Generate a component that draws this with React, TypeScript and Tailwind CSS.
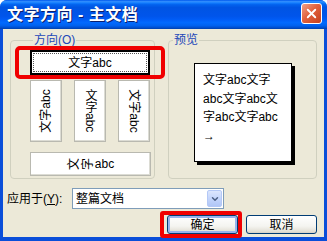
import { X, ChevronDown } from "lucide-react";

const font = "font-['Liberation_Sans','Noto_Sans_CJK_SC',sans-serif]";

function OptionButton({
  className,
  children,
}: {
  className: string;
  children: React.ReactNode;
}) {
  return (
    <div
      className={`flex items-center justify-center bg-white border border-[#b9b9b0] shadow-[inset_-1px_-1px_0_#dcdcd4] text-[12px] leading-[14px] text-black ${className}`}
    >
      {children}
    </div>
  );
}

function XpButton({
  label,
  primary,
}: {
  label: string;
  primary?: boolean;
}) {
  return (
    <button
      className={`w-[71px] h-[19px] rounded-[3px] border border-[#003c74] bg-[linear-gradient(to_bottom,#ffffff_0%,#f4f4f0_60%,#e3e0d6_90%,#d6d0c5_100%)] text-[12px] leading-[14px] text-black flex items-center justify-center ${
        primary ? "shadow-[inset_0_0_0_2px_#98b4ee]" : ""
      }`}
    >
      {label}
    </button>
  );
}

export default function App() {
  return (
    <div className={`w-[327px] h-[241px] bg-white ${font}`}>
      <div className="w-full h-full rounded-t-[7px] overflow-hidden flex flex-col bg-[#0a4ed9]">
        {/* Title bar */}
        <div className="h-[29px] shrink-0 flex items-center justify-between pl-[7px] pr-[5px] bg-[linear-gradient(to_bottom,#0058ee_0%,#3593ff_6%,#127dff_10%,#0262ee_16%,#0054e3_26%,#0055eb_56%,#005bf5_66%,#026afe_78%,#0062ef_88%,#0052d6_94%,#0040ab_100%)]">
          <span className="text-white font-bold text-[16px] leading-[18px] tracking-[0.5px] [text-shadow:1px_1px_0_#0a1f6e]">
            文字方向 - 主文档
          </span>
          <div className="w-[21px] h-[21px] mb-[2px] rounded-[3px] border border-white bg-[linear-gradient(135deg,#f0a088_0%,#e2623e_45%,#c4401d_100%)] flex items-center justify-center">
            <X className="w-[15px] h-[15px] text-white" strokeWidth={3} />
          </div>
        </div>

        {/* Body */}
        <div className="relative flex-1 mx-[3px] mb-[4px] bg-[#ece9d8] flex flex-col pt-[4px]">
          <div className="flex gap-[13px] px-[7px]">
            {/* Direction group */}
            <fieldset className="w-[146px] h-[146px] border border-[#d0d0bf] rounded-[4px] pl-[19px]">
              <legend className="ml-[3px] px-[1px] text-[12px] leading-[14px] text-[#1c47b8]">
                方向(O)
              </legend>
              <div className="pt-[3px] flex flex-col">
                <div className="w-[120px] h-[25px] bg-white border-2 border-black p-[1px]">
                  <div className="w-full h-full border border-dotted border-[#555] flex items-center justify-center text-[12px] leading-[14px]">
                    文字abc
                  </div>
                </div>
                <div className="mt-[5px] w-[120px] flex justify-between">
                  <OptionButton className="w-[32px] h-[62px]">
                    <span className="-rotate-90 whitespace-nowrap">文字abc</span>
                  </OptionButton>
                  <OptionButton className="w-[32px] h-[62px]">
                    <span className="[writing-mode:vertical-rl]">文字abc</span>
                  </OptionButton>
                  <OptionButton className="w-[32px] h-[62px]">
                    <span className="rotate-90 whitespace-nowrap">文字abc</span>
                  </OptionButton>
                </div>
                <OptionButton className="mt-[10px] w-[121px] h-[24px]">
                  <span className="inline-flex w-[14px] h-[12px] items-center justify-center">
                    <span className="-rotate-90">文</span>
                  </span>
                  <span className="inline-flex w-[14px] h-[12px] items-center justify-center">
                    <span className="-rotate-90">字</span>
                  </span>
                  <span>abc</span>
                </OptionButton>
              </div>
            </fieldset>

            {/* Preview group */}
            <fieldset className="w-[150px] h-[146px] border border-[#d0d0bf] rounded-[4px] flex flex-col items-center">
              <legend className="ml-[4px] px-[1px] text-[12px] leading-[14px] text-[#1c47b8]">
                预览
              </legend>
              <div className="mt-[16px] ml-[1px] w-[98px] h-[99px] bg-white border border-black shadow-[3px_3px_0_#000] pl-[8px] pt-[7px] text-[12px] leading-[18.5px] text-black whitespace-nowrap">
                <div>文字abc文字</div>
                <div>abc文字abc文</div>
                <div>字abc文字abc</div>
                <div>→</div>
              </div>
            </fieldset>
          </div>

          {/* Apply to */}
          <div className="mt-[9px] pl-[4px] flex items-center">
            <span className="w-[65px] text-[12px] leading-[14px] text-black">
              应用于(<u>Y</u>):
            </span>
            <div className="w-[152px] h-[21px] bg-white border border-[#7f9db9] flex items-center justify-between pl-[3px] pr-[1px]">
              <span className="text-[12px] leading-[14px] text-black">整篇文档</span>
              <div className="w-[15px] h-[17px] rounded-[2px] border border-[#b4c8f6] bg-[linear-gradient(to_bottom,#dce6fd_0%,#c4d5fb_50%,#b0c6f6_100%)] flex items-center justify-center">
                <ChevronDown className="w-[10px] h-[10px] text-[#4d6185]" strokeWidth={3.5} />
              </div>
            </div>
          </div>

          {/* Buttons */}
          <div className="mt-[6px] pr-[7px] flex justify-end gap-[8px]">
            <XpButton label="确定" primary />
            <XpButton label="取消" />
          </div>

          {/* Red annotations */}
          <div className="absolute left-[12px] top-[17px] w-[150px] h-[33px] border-[4px] border-[#f00000] rounded-[5px] pointer-events-none" />
          <div className="absolute left-[157px] top-[182px] w-[82px] h-[27px] border-[4px] border-[#f00000] rounded-[3px] pointer-events-none" />
        </div>
      </div>
    </div>
  );
}
